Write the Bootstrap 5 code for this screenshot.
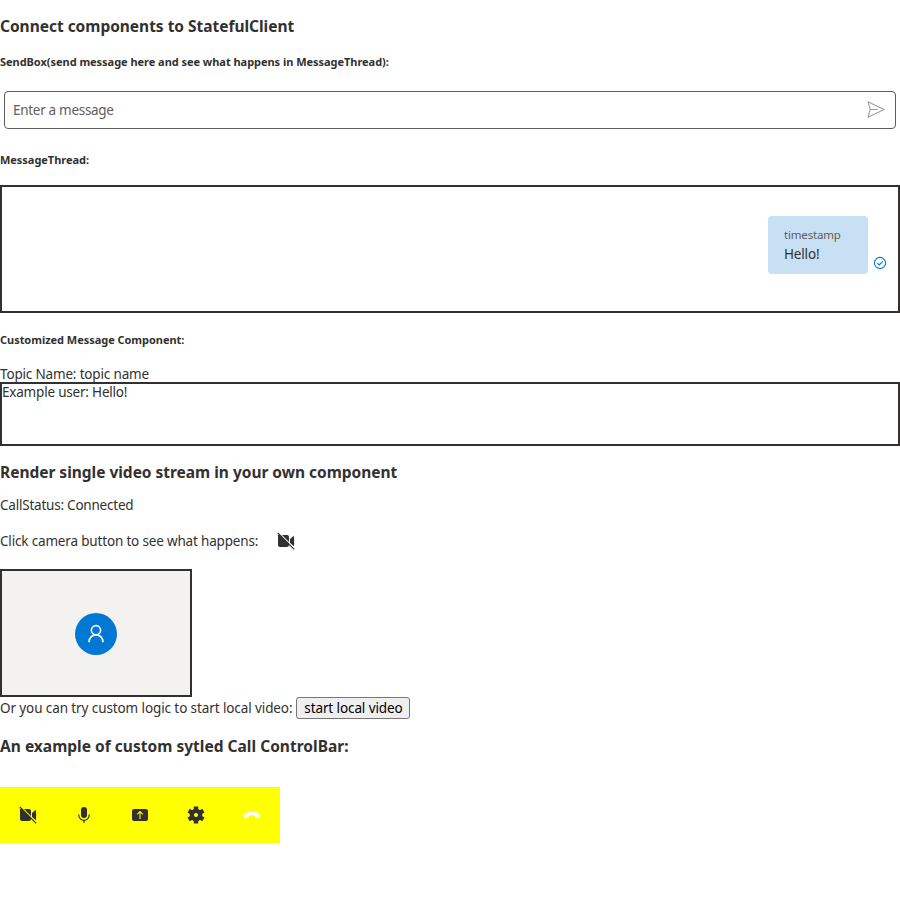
<!DOCTYPE html>
<html lang="en">
<head>
<meta charset="utf-8">
<meta name="viewport" content="width=device-width, initial-scale=1">
<title>StatefulClient components</title>
<link rel="stylesheet" href="https://cdn.jsdelivr.net/npm/bootstrap@5.3.0/dist/css/bootstrap.min.css">
<style>
body{font-family:"Segoe UI","Noto Sans","Open Sans",sans-serif;font-size:13.5px;line-height:18px;color:#323130;letter-spacing:-.17px;white-space:nowrap}
.title{font-size:15.5px;line-height:22px;font-weight:700;margin:0;padding-top:15px;letter-spacing:-.02px}
.bar-title{letter-spacing:.02px}
.label{font-size:11px;line-height:16px;font-weight:700;margin:0;letter-spacing:-.035px}
.intro-label{padding-top:17px}
.send-box{height:38px;margin:21px 4px 23px;padding:0 10px 0 8px;border:1px solid #605e5c;border-radius:4px;color:#605e5c;letter-spacing:-.3px}
.frame{border:2px solid #323130}
.thread{height:128px;margin-top:17px;padding:29px 10px 0 0}
.bubble{width:100px;height:58px;padding:10px 16px 0;border-radius:4px;background:#c7e0f4}
.stamp{font-size:11.5px;line-height:17px;margin-bottom:2px;color:#605e5c}
.receipt{margin-top:40px}
.custom-label{padding-top:19px}
.topic{margin-top:17px}
.custom{height:64px;margin-top:-1px;line-height:17px;letter-spacing:-.2px}
.status{margin-top:13px;letter-spacing:-.22px}
.camera-row{margin-top:-1px}
.tile{width:192px;height:128px;background:#f3f2f1}
.avatar{width:42px;height:42px;margin-top:1px;background:#0078d4}
.video-row{letter-spacing:-.1px}
.start{width:114px;height:22px;margin-left:4px;padding:0;border:1px solid #767676;border-radius:3px;background:#efefef;color:#000;line-height:18px;letter-spacing:inherit}
.controls{--gap:#ff0;width:280px;height:56px;margin-top:30px;background:#ff0}
.controls>button,.cam{width:56px;height:56px}
.plain{padding:0;border:0;background:none;color:#323130}
svg{display:block}
</style>
<script src="https://cdn.jsdelivr.net/npm/bootstrap@5.3.0/dist/js/bootstrap.bundle.min.js"></script>
</head>
<body>
<svg class="d-none">
  <symbol id="camera-off" viewBox="0 0 18 18">
    <path d="M1 3H10a2 2 0 0 1 2 2v8a2 2 0 0 1-2 2H3a2 2 0 0 1-2-2V3zM13 7l3.200-2.700c.4-.3.9 0 .9.500v8.400c0 .5-.5.8-.9.5L13 11z" fill="currentColor"/>
    <path d="M1.800 .6 18 16.800" stroke="var(--gap,#fff)" stroke-width="1.300"/>
    <path d="M.8 1 17.200 17.400" stroke="currentColor" stroke-width="1.100"/>
  </symbol>
</svg>
<main>
  <h3 class="title">Connect components to StatefulClient</h3>
  <h5 class="label intro-label">SendBox(send message here and see what happens in MessageThread):</h5>
  <div class="send-box d-flex align-items-center justify-content-between">
    <span>Enter a message</span>
    <svg width="18" height="18" viewBox="0 0 18 18" fill="none" stroke="#a19f9d" stroke-width="1.1" stroke-linejoin="round"><path d="M1 .8 17 8.500 1 16.200 3.300 8.500zM3.300 8.500H11"/></svg>
  </div>
  <h5 class="label">MessageThread:</h5>
  <div class="frame thread d-flex justify-content-end">
    <div class="bubble"><div class="stamp">timestamp</div><div>Hello!</div></div>
    <svg class="ms-1 receipt" width="16" height="16" viewBox="0 0 16 16" fill="none" stroke="#0078d4" stroke-width="1.1"><circle cx="8" cy="7" r="5.600"/><path d="m5.300 7.100 1.900 1.900 3.700-3.700"/></svg>
  </div>
  <h5 class="label custom-label">Customized Message Component:</h5>
  <div class="topic">Topic Name: topic name</div>
  <div class="frame custom">Example user: Hello!</div>
  <h3 class="title">Render single video stream in your own component</h3>
  <div class="status">CallStatus: Connected</div>
  <div class="d-flex align-items-center camera-row">
    <span>Click camera button to see what happens:</span>
    <button class="plain cam d-flex align-items-center justify-content-center" aria-label="Camera"><svg width="18" height="18"><use href="#camera-off"/></svg></button>
  </div>
  <div class="frame tile d-flex align-items-center justify-content-center">
    <div class="avatar rounded-circle d-flex align-items-center justify-content-center"><svg width="18" height="20" viewBox="0 0 18 20" fill="none" stroke="#fff" stroke-width="1.6"><circle cx="9" cy="6.200" r="4.600"/><path d="M2 18.200c0-9.800 14-9.800 14 0"/></svg></div>
  </div>
  <div class="d-flex align-items-center video-row"><span>Or you can try custom logic to start local video:</span><button class="start">start local video</button></div>
  <h3 class="title bar-title pt-3">An example of custom sytled Call ControlBar:</h3>
  <div class="controls d-flex">
    <button class="plain d-flex align-items-center justify-content-center" aria-label="Camera"><svg width="18" height="18"><use href="#camera-off"/></svg></button>
    <button class="plain d-flex align-items-center justify-content-center" aria-label="Microphone"><svg width="18" height="18" viewBox="0 0 18 18"><rect x="6" y="1" width="6" height="11" rx="3" fill="currentColor"/><path d="M3.800 8.500v.7a5.200 5.200 0 0 0 10.400 0v-.7M9 14.400V17" fill="none" stroke="currentColor" stroke-width="1.2"/></svg></button>
    <button class="plain d-flex align-items-center justify-content-center" aria-label="Share screen"><svg width="18" height="18" viewBox="0 0 18 18"><rect x="1" y="3" width="16" height="12" rx="2" fill="currentColor"/><path d="M9 13V5.800M6.200 8.400 9 5.600l2.800 2.800" fill="none" stroke="#ff0" stroke-width="1.1"/></svg></button>
    <button class="plain d-flex align-items-center justify-content-center" aria-label="Settings"><svg width="18" height="18" viewBox="0 0 18 18" fill="none" stroke="currentColor"><circle cx="9" cy="9" r="4.200" stroke-width="4.200"/><path d="M9 .5v3.500M9 14v3.500M1.600 4.700l3 1.750M13.400 11.550l3 1.750M1.600 13.300l3-1.750M13.400 6.450l3-1.750" stroke-width="4.400"/></svg></button>
    <button class="plain d-flex align-items-center justify-content-center" aria-label="Hang up"><svg width="18" height="18" viewBox="0 0 18 18"><path d="M1 10.200C1 7.200 4.300 5.700 9 5.700s8 1.500 8 4.500c0 1.400-.6 2.100-1.700 1.900l-2.100-.4c-.8-.2-1.100-.7-1.200-1.500l-.1-.5C10 9.200 8 9.200 6.100 9.700l-.1.5c-.1.800-.4 1.300-1.200 1.500l-2.100.4C1.600 12.300 1 11.600 1 10.200z" fill="#fff"/></svg></button>
  </div>
</main>
</body>
</html>
